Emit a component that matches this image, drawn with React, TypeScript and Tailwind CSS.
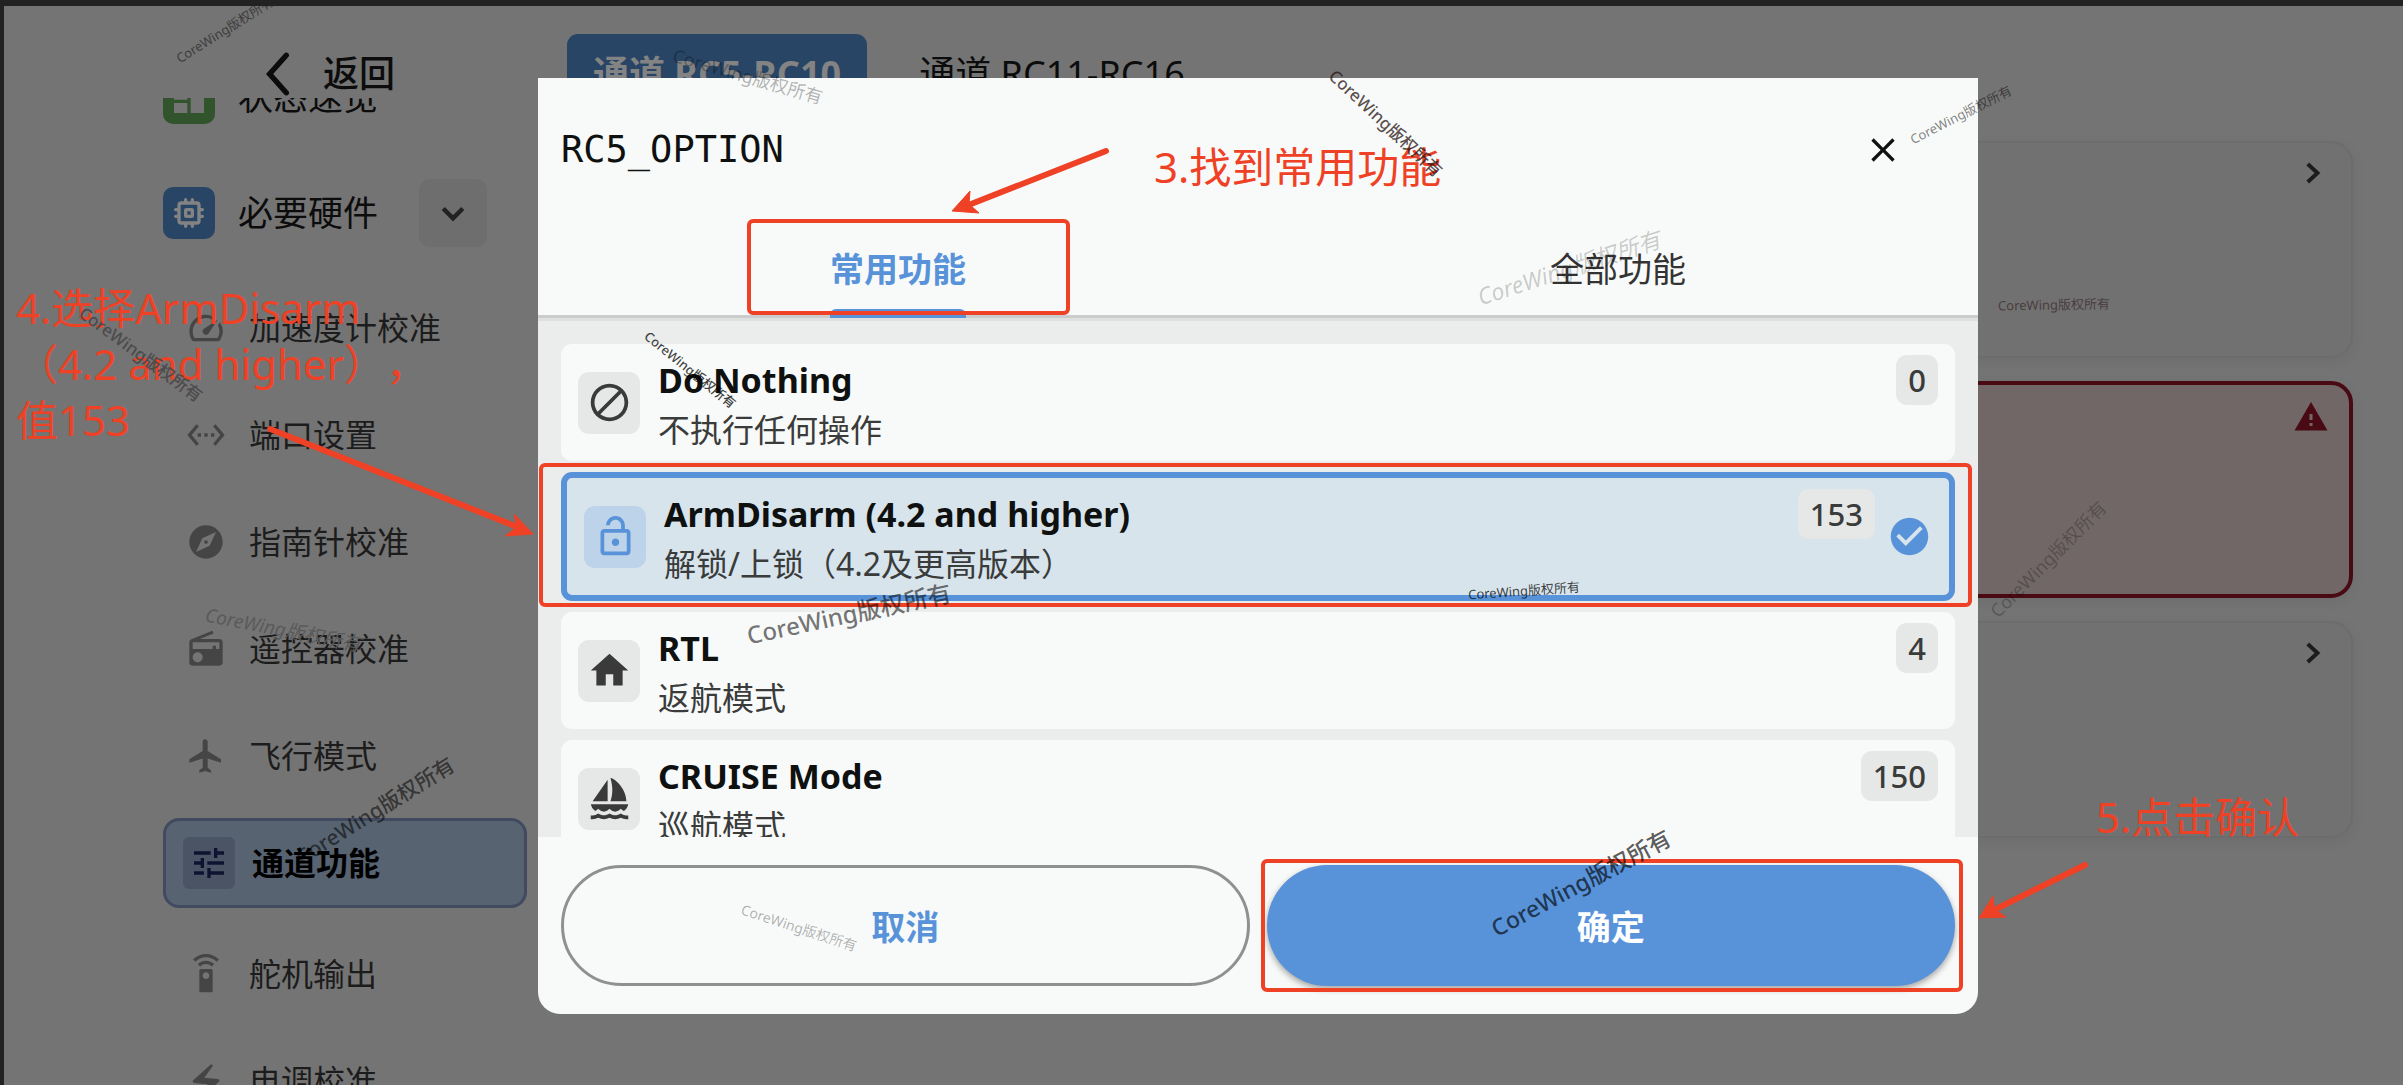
import { useState } from "react";
import type { IconType } from "react-icons";
import {
  MdBlock,
  MdCheckCircle,
  MdClose,
  MdDashboard,
  MdElectricBolt,
  MdExplore,
  MdFlight,
  MdHome,
  MdOutlineLockOpen,
  MdRadio,
  MdSailing,
  MdSettingsEthernet,
  MdSettingsRemote,
  MdSpeed,
  MdTune,
  MdWarning,
} from "react-icons/md";

type MenuItem = { icon: IconType; label: string; active?: boolean };
type Option = { icon: IconType; name: string; desc: string; value: number };
type Mark = { x: number; y: number; angle: number; className: string };

const menuItems: MenuItem[] = [
  { icon: MdSpeed, label: "加速度计校准" },
  { icon: MdSettingsEthernet, label: "端口设置" },
  { icon: MdExplore, label: "指南针校准" },
  { icon: MdRadio, label: "遥控器校准" },
  { icon: MdFlight, label: "飞行模式" },
  { icon: MdTune, label: "通道功能", active: true },
  { icon: MdSettingsRemote, label: "舵机输出" },
  { icon: MdElectricBolt, label: "电调校准" },
];

const options: Option[] = [
  { icon: MdBlock, name: "Do Nothing", desc: "不执行任何操作", value: 0 },
  {
    icon: MdOutlineLockOpen,
    name: "ArmDisarm (4.2 and higher)",
    desc: "解锁/上锁（4.2及更高版本）",
    value: 153,
  },
  { icon: MdHome, name: "RTL", desc: "返航模式", value: 4 },
  { icon: MdSailing, name: "CRUISE Mode", desc: "巡航模式", value: 150 },
];

const marks: Mark[] = [
  { x: 225, y: 30, angle: -32, className: "text-[13px] text-[#3f3d3f]" },
  { x: 141, y: 354, angle: 36, className: "text-[17px] font-medium text-[#4d4b4c]" },
  { x: 283, y: 630, angle: 11, className: "text-[19px] italic text-[#5a5a5a]" },
  { x: 375, y: 811, angle: -32, className: "text-[21px] font-medium text-black/55" },
  { x: 748, y: 76, angle: 16, className: "text-[18px] text-black/30" },
  { x: 1386, y: 123, angle: 43, className: "text-[17px] font-medium text-[#281414]/75" },
  { x: 1961, y: 115, angle: -27, className: "text-[13px] text-black/50" },
  { x: 1569, y: 268, angle: -18, className: "text-[23px] italic text-black/20" },
  { x: 690, y: 370, angle: 39, className: "text-[13px] font-medium text-black/75" },
  { x: 849, y: 614, angle: -12, className: "text-[24px] font-medium text-black/55" },
  { x: 1524, y: 591, angle: -4, className: "text-[13px] text-black/75" },
  { x: 799, y: 928, angle: 18, className: "text-[14px] text-black/30" },
  { x: 1581, y: 883, angle: -28, className: "text-[23px] font-medium text-black/65" },
  { x: 2054, y: 305, angle: -1, className: "text-[13px] text-[#4a3e40]" },
  { x: 2048, y: 559, angle: -45, className: "text-[18px] text-black/25" },
];

const Chevron = ({ d, className }: { d: string; className: string }) => (
  <svg viewBox="0 0 24 24" className={className} fill="none" stroke="currentColor">
    <path d={d} />
  </svg>
);

const ChipIcon = () => (
  <svg viewBox="0 0 24 24" className="size-10" fill="none" stroke="currentColor" strokeWidth="2" strokeLinecap="round">
    <rect x="6" y="6" width="12" height="12" rx="1.4" />
    <rect x="10" y="10" width="4" height="4" rx="0.4" />
    <path d="M10 5.500V4M14 5.500V4M10 20v-1.500M14 20v-1.500M5.500 10H4M5.500 14H4M20 10h-1.500M20 14h-1.500" />
  </svg>
);

const Sidebar = () => (
  <aside className="flex w-[528px] shrink-0 flex-col pr-[5px] pl-[159px]">
    <header className="flex h-[92px] shrink-0 items-center pt-11 pl-[91px]">
      <button className="flex items-center gap-[19px] text-[36px] leading-[40px] font-medium text-[#0c0c0c]">
        <Chevron d="M15.500 3 L7.500 12 L15.500 21" className="size-[50px] stroke-[2.600] [stroke-linecap:round]" />
        返回
      </button>
    </header>
    <nav className="min-h-0 flex-1 overflow-hidden">
      <div className="-mt-[35px] flex h-[68px] items-center gap-[23px] pt-px text-[35px] text-[#0c0c0c]">
        <span className="flex size-[52px] items-center justify-center rounded-[10px] bg-[#31542c] text-[#747474]">
          <MdDashboard className="size-10" />
        </span>
        状态速览
      </div>
      <div className="mt-12 flex h-[68px] items-center gap-[23px] text-[35px] text-[#0c0c0c]">
        <span className="flex size-[52px] items-center justify-center rounded-[10px] bg-[#284566] text-[#838383]">
          <ChipIcon />
        </span>
        必要硬件
        <button aria-label="折叠" className="mr-10 ml-auto flex size-[68px] items-center justify-center rounded-[11px] bg-[#6e6e6e] text-[#222]">
          <Chevron d="M5.500 9 L12 15.500 L18.500 9" className="size-9 stroke-[3]" />
        </button>
      </div>
      <ul className="mt-9 flex flex-col gap-[17px]">
        {menuItems.map(({ icon: Icon, label, active }) =>
          active ? (
            <li key={label} className="mb-1">
              <a href="#" className="flex h-[90px] items-center rounded-2xl border-3 border-[#404b60] bg-[#576370] pl-[17px] text-[32px] font-bold text-black">
                <span className="mr-[17px] flex size-[52px] items-center justify-center rounded-md bg-[#4a5465] text-[#0e1332]">
                  <Icon className="size-10" />
                </span>
                {label}
              </a>
            </li>
          ) : (
            <li key={label}>
              <a href="#" className="flex h-[90px] items-center gap-[23px] pl-[23px] text-[32px] text-[#1c1c1c]">
                <Icon className="size-10 text-[#454545]" />
                {label}
              </a>
            </li>
          )
        )}
      </ul>
    </nav>
  </aside>
);

const ChannelPage = () => (
  <main className="flex min-w-0 flex-1 flex-col pt-7 pr-[50px] pl-[35px] text-[36px]">
    <div className="flex h-20 shrink-0 items-center gap-[26px]">
      <button className="h-full rounded-[11px] bg-[#284566] px-[26px] font-bold text-[#838383]">通道 RC5-RC10</button>
      <button className="h-full px-[26px] text-[#0c0c0c]">通道 RC11-RC16</button>
    </div>
    <div className="mt-[27px] flex flex-col gap-[23px]">
      <section className="flex h-[217px] justify-end rounded-[22px] border-2 border-[#6c6c6c] bg-[#717171] px-5 pt-3 shadow-[0_4px_14px_rgba(0,0,0,0.06)]">
        <Chevron d="M8.500 6 L15 12 L8.500 18" className="size-9 stroke-[2.600] text-[#1c1c1c]" />
      </section>
      <section className="flex h-[217px] justify-end rounded-[22px] border-4 border-[#490a14] bg-[#726767] px-5 pt-[14px] shadow-[0_4px_14px_rgba(0,0,0,0.06)]">
        <MdWarning className="size-9 text-[#490a14]" />
      </section>
      <section className="flex h-[217px] justify-end rounded-[22px] border-2 border-[#6c6c6c] bg-[#717171] px-5 pt-3 shadow-[0_4px_14px_rgba(0,0,0,0.06)]">
        <Chevron d="M8.500 6 L15 12 L8.500 18" className="size-9 stroke-[2.600] text-[#1c1c1c]" />
      </section>
    </div>
  </main>
);

const OptionCard = ({ option, selected, onSelect }: { option: Option; selected: boolean; onSelect: () => void }) => {
  const Icon = option.icon;
  return (
    <div className="relative">
      <button
        onClick={onSelect}
        className={
          selected
            ? "flex w-full items-center rounded-[11px] border-6 border-[#5893da] bg-[#d8e4ec] px-[17px] text-left"
            : "flex w-full items-center rounded-[11px] bg-[#f8faf9] px-[17px] text-left"
        }
      >
        <span
          className={
            selected
              ? "flex size-[62px] items-center justify-center rounded-[11px] bg-[#bdd3e9] text-[#5893da]"
              : "flex size-[62px] items-center justify-center rounded-[11px] bg-[#e6e8e7] text-[#3a3a3a]"
          }
        >
          <Icon className="size-[45px]" />
        </span>
        <span className="ml-[18px] flex h-[117px] flex-1 flex-col pt-[11px]">
          <span className="text-[34px] leading-[50px] font-bold text-[#0f1010]">{option.name}</span>
          <span className="text-[32px] leading-[50px] text-[#3a3b3b]">{option.desc}</span>
        </span>
        <span className="mt-[11px] flex h-[50px] items-center self-start rounded-[11px] bg-[#e6e8e7] px-3 text-[31px] font-medium text-[#3a3b3b]">
          {option.value}
        </span>
        {selected && <MdCheckCircle className="ml-3 size-[45px] text-[#5893da]" />}
      </button>
      {selected && (
        <div className="pointer-events-none absolute -top-[9px] -right-[17px] -bottom-[6px] -left-[22px] rounded-md border-4 border-[#ee4125]" />
      )}
    </div>
  );
};

const OptionDialog = () => {
  const [value, setValue] = useState(153);

  return (
    <div role="dialog" aria-label="RC5_OPTION" className="flex h-[936px] min-w-0 flex-1 flex-col rounded-b-[22px] bg-[#f8faf9]">
      <div className="flex h-[142px] shrink-0 items-center justify-between pt-[2px] pr-[75px] pl-[23px]">
        <h2 className="font-['DejaVu_Sans_Mono'] text-[37px] text-[#0f1010]">RC5_OPTION</h2>
        <button aria-label="关闭" className="text-[#0f1010]">
          <MdClose className="size-10" />
        </button>
      </div>
      <div role="tablist" className="grid h-[98px] shrink-0 grid-cols-2 border-b-3 border-[#cbcdcc] text-[34px]">
        <div className="flex justify-center">
          <button role="tab" aria-selected="true" className="relative pt-1 font-bold text-[#5893da]">
            常用功能
            <span className="absolute inset-x-0 -bottom-[3px] h-[9px] rounded-t-[6px] bg-[#5893da]" />
            <span className="absolute -top-px -right-[104px] bottom-0 -left-[83px] rounded-md border-4 border-[#ee4125]" />
          </button>
        </div>
        <button role="tab" aria-selected="false" className="pt-1 text-[#333]">全部功能</button>
      </div>
      <div className="min-h-0 flex-1 overflow-hidden border-t-3 border-[#dfe1e0] bg-[#ebedec] px-[23px] pt-[23px]">
        <div className="flex flex-col gap-[11px]">
          {options.map((option) => (
            <OptionCard
              key={option.name}
              option={option}
              selected={option.value === value}
              onSelect={() => setValue(option.value)}
            />
          ))}
        </div>
      </div>
      <div className="grid shrink-0 grid-cols-2 gap-[17px] px-[23px] py-7 text-[34px] font-bold">
        <button className="h-[121px] rounded-full border-3 border-[#8f9190] pt-1 text-[#5893da]">取消</button>
        <div className="relative">
          <button className="h-[121px] w-full rounded-full bg-[#5893da] pt-1 text-white shadow-[0_3px_6px_rgba(0,0,0,0.35)]">确定</button>
          <div className="pointer-events-none absolute -inset-y-[6px] -right-[8px] -left-[6px] rounded-md border-4 border-[#ee4125]" />
        </div>
      </div>
    </div>
  );
};

// Tutorial notes drawn on top of the app
const Annotations = () => (
  <div className="pointer-events-none absolute -top-[6px] -left-1 text-[42px] leading-[56px] text-[#ee4125] [text-spacing-trim:space-all]">
    <svg className="absolute top-0 left-0 h-[1085px] w-[2403px]" fill="#ee4125" stroke="#ee4125">
      <path d="M1106 151 L966 206" strokeWidth="6" strokeLinecap="round" />
      <path d="M952 211 L970 191 L969 204 L979 213 Z" strokeWidth="1" />
      <path d="M270 429 L520 528" strokeWidth="6" strokeLinecap="round" />
      <path d="M533 534 L514 514 L517 527 L505 536 Z" strokeWidth="1" />
      <path d="M2085 865 L1994 910" strokeWidth="6" strokeLinecap="round" />
      <path d="M1979 918 L1993 896 L1994 909 L2006 917 Z" strokeWidth="1" />
    </svg>
    <p className="absolute top-[139px] left-[1154px] whitespace-nowrap">3.找到常用功能</p>
    <p className="absolute top-[280px] left-4 whitespace-nowrap">
      4.选择ArmDisarm
      <br />
      （4.2 and higher），
      <br />
      值153
    </p>
    <p className="absolute top-[789px] left-[2096px] whitespace-nowrap">5.点击确认</p>
    {marks.map(({ x, y, angle, className }) => (
      <span
        key={`${x}-${y}`}
        className="absolute"
        style={{ left: x, top: y, transform: `translate(-50%, -50%) rotate(${angle}deg)` }}
      >
        <span className={`block leading-none whitespace-nowrap ${className}`}>CoreWing版权所有</span>
      </span>
    ))}
  </div>
);

const App = () => (
  <div className="relative flex h-screen overflow-hidden border-t-6 border-l-4 border-[#222] bg-[#747474] font-['Noto_Sans','Noto_Sans_CJK_SC',sans-serif]">
    <Sidebar />
    <ChannelPage />
    <div className="absolute inset-0 flex items-start pt-[72px] pr-[425px] pl-[534px]">
      <OptionDialog />
    </div>
    <Annotations />
  </div>
);

export default App;
